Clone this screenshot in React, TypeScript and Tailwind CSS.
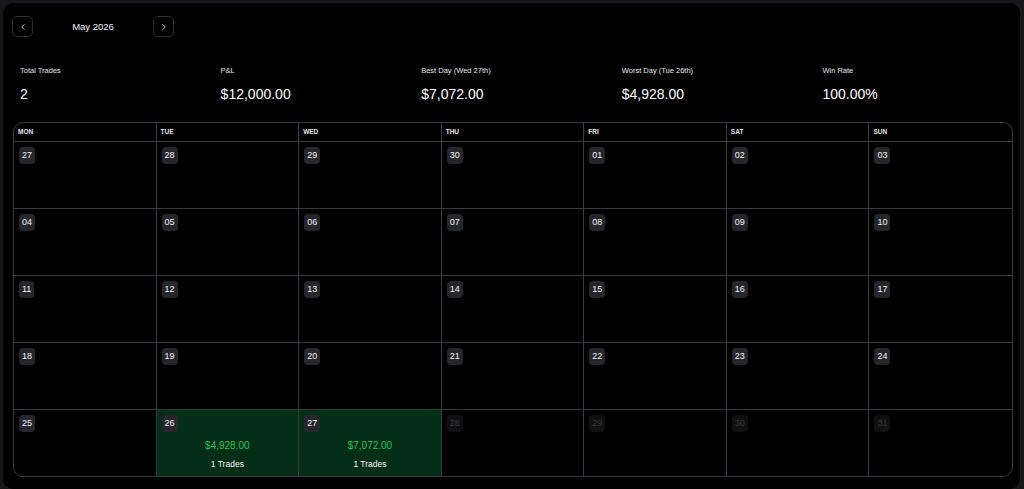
import React from 'react';
import { ChevronLeft, ChevronRight } from 'lucide-react';

type Day = {
  label: string;
  muted?: boolean;
  pnl?: string;
  trades?: number;
};

const stats = [
  { label: 'Total Trades', value: '2' },
  { label: 'P&L', value: '$12,000.00' },
  { label: 'Best Day (Wed 27th)', value: '$7,072.00' },
  { label: 'Worst Day (Tue 26th)', value: '$4,928.00' },
  { label: 'Win Rate', value: '100.00%' },
];

const weekdays = ['MON', 'TUE', 'WED', 'THU', 'FRI', 'SAT', 'SUN'];

const pad = (n: number) => (n < 10 ? `0${n}` : `${n}`);

// Apr 27 .. May 31, 2026
const days: Day[] = [
  ...[27, 28, 29, 30].map((d) => ({ label: `${d}` })),
  ...Array.from({ length: 31 }, (_, i) => {
    const d = i + 1;
    const day: Day = { label: pad(d) };
    if (d === 26) {
      day.pnl = '$4,928.00';
      day.trades = 1;
    }
    if (d === 27) {
      day.pnl = '$7,072.00';
      day.trades = 1;
    }
    if (d > 27) day.muted = true;
    return day;
  }),
];

const App: React.FC = () => {
  return (
    <div
      className="w-[1024px] h-[489px] bg-[#17171b] pt-[3px] pl-[3px] overflow-hidden"
      style={{ fontFamily: '"Liberation Sans", Arial, sans-serif' }}
    >
      <div className="w-[1017px] h-[486px] bg-black rounded-[10px] flex flex-col">
        {/* month nav */}
        <div className="flex items-center ml-[9px] mt-[13px] h-[21px]">
          <button className="w-[21px] h-[21px] flex items-center justify-center border border-[#2e2e33] rounded-[5px] text-gray-300">
            <ChevronLeft size={10} strokeWidth={2} />
          </button>
          <div className="w-[120px] text-center text-[9.5px] text-gray-100 pt-[1px]">May 2026</div>
          <button className="w-[21px] h-[21px] flex items-center justify-center border border-[#2e2e33] rounded-[5px] text-gray-300">
            <ChevronRight size={10} strokeWidth={2} />
          </button>
        </div>

        {/* stats */}
        <div className="grid grid-cols-5 w-[1003px] ml-[17px] mt-[29px]">
          {stats.map((s) => (
            <div key={s.label}>
              <div className="text-[7.5px] leading-[10px] text-gray-200">{s.label}</div>
              <div className="text-[14px] leading-[17px] text-white mt-[10px]">{s.value}</div>
            </div>
          ))}
        </div>

        {/* calendar */}
        <div className="ml-[10px] mt-[19px] w-[1000px] border border-[#3a3a40] rounded-[10px] overflow-hidden">
          <div className="grid grid-cols-7 border-b border-[#3a3a40]">
            {weekdays.map((w, i) => (
              <div
                key={w}
                className={`h-[18px] flex items-center pl-[4px] text-[6.5px] font-bold text-gray-200 ${i < 6 ? 'border-r border-[#3a3a40]' : ''}`}
              >
                {w}
              </div>
            ))}
          </div>
          <div className="grid grid-cols-7">
            {days.map((d, i) => {
              const lastCol = i % 7 === 6;
              const lastRow = i >= 28;
              return (
                <div
                  key={i}
                  className={`flex flex-col ${lastRow ? 'h-[66px]' : 'h-[67px] border-b border-[#3a3a40]'} ${lastCol ? '' : 'border-r border-[#3a3a40]'} ${d.pnl ? 'bg-[#052e16]' : ''}`}
                >
                  <div
                    className={`ml-[5px] mt-[5px] self-start h-[17px] px-[3px] rounded-[4px] flex items-center text-[9px] ${d.muted ? 'bg-[#101012] text-[#3b3b3f]' : 'bg-[#26272c] text-gray-100'}`}
                  >
                    {d.label}
                  </div>
                  {d.pnl && (
                    <div className="flex flex-col items-center mt-[8px]">
                      <div className="text-[10px] leading-[12px] text-[#22c55e]">{d.pnl}</div>
                      <div className="text-[8.5px] leading-[10px] text-gray-100 mt-[7px]">{d.trades} Trades</div>
                    </div>
                  )}
                </div>
              );
            })}
          </div>
        </div>
      </div>
    </div>
  );
};

export default App;
